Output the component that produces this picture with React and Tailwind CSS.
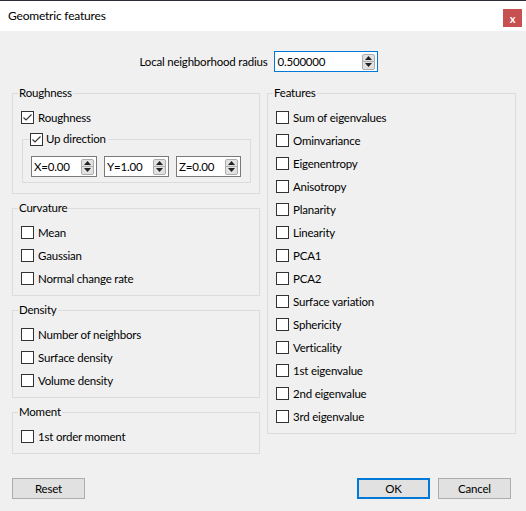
import React from "react";

const FONT = { fontFamily: 'Lato, "Segoe UI", sans-serif' };

function CheckBox({ checked }) {
  return (
    <span className="w-[13px] h-[13px] border border-[#333333] bg-white flex items-center justify-center shrink-0">
      {checked && (
        <svg width="11" height="11" viewBox="0 0 11 11">
          <path d="M1.5 5.5 L4 8 L9.5 2.5" stroke="#333333" strokeWidth="1.1" fill="none" />
        </svg>
      )}
    </span>
  );
}

function CheckRow({ label, checked }) {
  return (
    <div className="h-[23px] flex items-center gap-[4px]">
      <CheckBox checked={checked} />
      <span>{label}</span>
    </div>
  );
}

function SpinArrows() {
  return (
    <div className="w-[13px] h-[16px] border border-[#adadad] bg-[#e1e1e1] rounded-[2px] flex flex-col shrink-0">
      <div className="flex-1 flex items-center justify-center border-b border-[#adadad]">
        <svg width="7" height="4" viewBox="0 0 7 4">
          <path d="M0 4 L3.5 0 L7 4 Z" fill="#222222" />
        </svg>
      </div>
      <div className="flex-1 flex items-center justify-center">
        <svg width="7" height="4" viewBox="0 0 7 4">
          <path d="M0 0 L3.5 4 L7 0 Z" fill="#222222" />
        </svg>
      </div>
    </div>
  );
}

function SpinBox({ value, width, focused }) {
  return (
    <div
      className={`h-[21px] ${width} border ${focused ? "border-[#0078d7]" : "border-[#7a7a7a]"} bg-white flex items-center justify-between pl-[2px] pr-[2px]`}
    >
      <span>{value}</span>
      <SpinArrows />
    </div>
  );
}

function Group({ title, children, className = "" }) {
  return (
    <fieldset className={`border border-[#dcdcdc] p-0 m-0 ${className}`}>
      <legend className="ml-[5px] px-[1px] h-[14px] leading-[14px]">{title}</legend>
      <div className="px-[8px] pt-[6px] pb-[5px]">{children}</div>
    </fieldset>
  );
}

function Button({ children, primary }) {
  return (
    <button
      className={`w-[73px] h-[21px] bg-[#e1e1e1] ${primary ? "border-2 border-[#0078d7]" : "border border-[#adadad]"} flex items-center justify-center text-black`}
    >
      {children}
    </button>
  );
}

export default function App() {
  const features = [
    "Sum of eigenvalues",
    "Ominvariance",
    "Eigenentropy",
    "Anisotropy",
    "Planarity",
    "Linearity",
    "PCA1",
    "PCA2",
    "Surface variation",
    "Sphericity",
    "Verticality",
    "1st eigenvalue",
    "2nd eigenvalue",
    "3rd eigenvalue",
  ];

  return (
    <div
      className="w-[526px] h-[511px] bg-[#f0f0f0] flex flex-col text-[11.5px] tracking-[-0.2px] text-black overflow-hidden"
      style={FONT}
    >
      {/* Title bar */}
      <div className="h-[31px] bg-white border-t border-[#2b2b3a] flex items-center justify-between pl-[8px] pr-[4px] shrink-0">
        <span className="text-[12px]">Geometric features</span>
        <div className="w-[19px] h-[18px] bg-[#c75050] flex items-center justify-center mt-[4px]">
          <span className="text-white font-bold text-[11px] leading-none">x</span>
        </div>
      </div>

      {/* Radius row */}
      <div className="mt-[20px] h-[21px] flex items-center justify-center gap-[7px] pr-[8px]">
        <span>Local neighborhood radius</span>
        <SpinBox value="0.500000" width="w-[104px]" focused />
      </div>

      {/* Columns */}
      <div className="mt-[14px] flex gap-[7px] pl-[12px] pr-[10px] items-start">
        <div className="w-[248px] flex flex-col gap-[7px]">
          <fieldset className="border border-[#dcdcdc] p-0 m-0">
            <legend className="ml-[5px] px-[1px] h-[14px] leading-[14px]">Roughness</legend>
            <div className="px-[8px] pt-[6px] pb-[10px]">
              <CheckRow label="Roughness" checked />
              <fieldset className="mt-[3px] ml-[1px] border border-[#dcdcdc] p-0 m-0">
                <legend className="ml-[7px] h-[14px] flex items-center gap-[3px] pr-[2px]">
                  <CheckBox checked />
                  <span className="leading-[14px]">Up direction</span>
                </legend>
                <div className="pl-[8px] pt-[10px] pb-[5px] flex gap-[7px]">
                  <SpinBox value="X=0.00" width="w-[66px]" />
                  <SpinBox value="Y=1.00" width="w-[65px]" />
                  <SpinBox value="Z=0.00" width="w-[65px]" />
                </div>
              </fieldset>
            </div>
          </fieldset>

          <Group title="Curvature">
            <CheckRow label="Mean" />
            <CheckRow label="Gaussian" />
            <CheckRow label="Normal change rate" />
          </Group>

          <Group title="Density">
            <CheckRow label="Number of neighbors" />
            <CheckRow label="Surface density" />
            <CheckRow label="Volume density" />
          </Group>

          <Group title="Moment">
            <CheckRow label="1st order moment" />
          </Group>
        </div>

        <Group title="Features" className="w-[249px]">
          {features.map((f) => (
            <CheckRow key={f} label={f} />
          ))}
        </Group>
      </div>

      {/* Buttons */}
      <div className="mt-[24px] flex items-center justify-between pl-[12px] pr-[15px]">
        <Button>Reset</Button>
        <div className="flex gap-[8px]">
          <Button primary>OK</Button>
          <Button>Cancel</Button>
        </div>
      </div>
    </div>
  );
}
